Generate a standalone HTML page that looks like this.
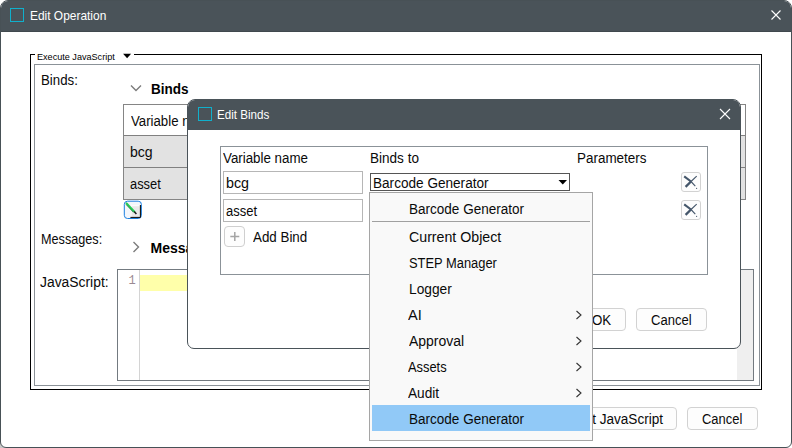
<!DOCTYPE html>
<html><head><meta charset="utf-8"><title>Edit Operation</title>
<style>
*{box-sizing:border-box;margin:0;padding:0}
html,body{width:792px;height:448px;overflow:hidden;background:#fff}
body{font-family:"Liberation Sans",sans-serif;font-size:14px;color:#0a0a0a;position:relative}
.abs,.t{position:absolute}
.t{white-space:nowrap;line-height:1;transform-origin:0 0}
#win{position:absolute;left:0;top:0;width:792px;height:448px;border:1px solid #485156;border-radius:8px 8px 6px 6px;background:#fff;overflow:hidden}
.tb{position:absolute;left:0;top:0;right:0;background:#4a5359}
.ico{position:absolute;width:14px;height:14px;border:1.5px solid #10b0cc}
.btn{position:absolute;border:1px solid #d2d2d2;border-radius:4px;background:#fdfdfd}
.fld{position:absolute;border:1px solid #b6b6b6;background:#fff}
</style></head><body>
<div class="abs" style="left:0;top:443px;width:5px;height:5px;background:#c8c8c8"></div>
<div id="win">
 <div class="tb" style="height:30px"></div>
 <div class="tb" style="top:30px;height:1px;background:#40494e"></div>
</div>
<!-- main title -->
<div class="ico" style="left:10px;top:8px"></div>
<svg class="abs" style="left:769px;top:8px" width="14" height="14" viewBox="0 0 14 14"><path d="M2.5 2.5 L11.5 11.5 M11.5 2.5 L2.5 11.5" stroke="#fff" stroke-width="1.1" fill="none"/></svg>

<!-- fieldset -->
<div class="abs" style="left:30px;top:54px;width:732px;height:336px;border:1px solid #000"></div>
<div class="abs" style="left:34px;top:64px;width:726px;height:322px;border:1px solid #8b9298"></div>
<div class="abs" style="left:35px;top:50px;width:99px;height:12px;background:#fff"></div>
<svg class="abs" style="left:123px;top:53px" width="9" height="6" viewBox="0 0 9 6"><path d="M0.1 0.8 L8.1 0.8 L4.1 5.3 Z" fill="#000"/></svg>

<!-- binds header -->
<svg class="abs" style="left:129px;top:83px" width="14" height="10" viewBox="0 0 14 10"><path d="M2 2.5 L7 7.5 L12 2.5" stroke="#7c7c7c" stroke-width="1.4" fill="none"/></svg>

<!-- table -->
<div class="abs" style="left:123px;top:104px;width:623px;height:96px;border:1px solid #858585;background:#fff"></div>
<div class="abs" style="left:124px;top:135px;width:621px;height:64px;background:#e2e2e2"></div>
<div class="abs" style="left:124px;top:135px;width:621px;height:1px;background:#808080"></div>
<div class="abs" style="left:124px;top:167px;width:621px;height:1px;background:#808080"></div>

<!-- edit icon -->
<svg class="abs" style="left:123px;top:200px" width="20" height="20" viewBox="0 0 20 20">
 <rect x="1.3" y="1.2" width="17.1" height="17.3" rx="3.2" fill="#f3f6fb" stroke="#1a7fe0" stroke-width="1"/>
 <rect x="7.5" y="5.2" width="9.6" height="12" fill="#e9e9e9"/>
 <path d="M8 17 V5.7 H17" stroke="#fff" stroke-width="1" fill="none"/>
 <path d="M17.4 5 V17.4 H7.4" stroke="#000" stroke-width="1" fill="none"/>
 <path d="M3.6 3.4 L11.3 11.6" stroke="#22cc55" stroke-width="2.1" stroke-linecap="round"/>
 <path d="M3.0 4.4 L10.4 12.2" stroke="#0b6e2b" stroke-width="0.8"/>
 <path d="M11.2 11.6 L13.4 14.0" stroke="#1c1c1c" stroke-width="1.5"/>
</svg>

<!-- messages header -->
<svg class="abs" style="left:131px;top:240px" width="10" height="14" viewBox="0 0 10 14"><path d="M2.5 2 L7.5 7 L2.5 12" stroke="#7c7c7c" stroke-width="1.4" fill="none"/></svg>

<!-- code editor -->
<div class="abs" style="left:117px;top:269px;width:637px;height:112px;border:1px solid #737a80;background:#fff"></div>
<div class="abs" style="left:139px;top:270px;width:1px;height:110px;background:#d4d4d4"></div>
<div class="abs" style="left:140px;top:275px;width:597px;height:16px;background:#ffffaa"></div>
<div class="abs" style="left:737px;top:270px;width:16px;height:110px;background:#efefef"></div>
<div class="t" style="left:128.5px;top:275.3px;font-family:'Liberation Mono',monospace;font-size:12px;color:#9b8a92">1</div>

<!-- bottom buttons -->
<div class="btn" style="left:560px;top:407px;width:117px;height:23px"></div>
<div class="btn" style="left:687px;top:407px;width:71px;height:23px"></div>
<div class="t" style="left:29.58px;top:9.50px;font-size:12.4px;transform:scaleX(0.9628);color:#fff;">Edit Operation</div>
<div class="t" style="left:36.56px;top:51.62px;font-size:9.9px;transform:scaleX(0.9201);color:#000;">Execute JavaScript</div>
<div class="t" style="left:40.97px;top:72.75px;font-size:14.0px;transform:scaleX(0.9466);">Binds:</div>
<div class="t" style="left:40.66px;top:231.65px;font-size:14.0px;transform:scaleX(0.9036);">Messages:</div>
<div class="t" style="left:39.68px;top:274.65px;font-size:14.0px;transform:scaleX(0.9911);">JavaScript:</div>
<div class="t" style="left:150.54px;top:81.75px;font-size:14.0px;transform:scaleX(0.9642);color:#000;font-weight:bold;">Binds</div>
<div class="t" style="left:150.51px;top:240.75px;font-size:14.0px;transform:scaleX(1.0000);color:#000;font-weight:bold;">Messages</div>
<div class="t" style="left:130.69px;top:113.90px;font-size:14.0px;transform:scaleX(0.9440);">Variable name</div>
<div class="t" style="left:129.67px;top:144.65px;font-size:14.0px;transform:scaleX(1.0059);">bcg</div>
<div class="t" style="left:129.64px;top:177.15px;font-size:14.0px;transform:scaleX(0.9197);">asset</div>
<div class="t" style="left:570.69px;top:412.15px;font-size:14.0px;transform:scaleX(0.9700);">Test JavaScript</div>
<div class="t" style="left:701.68px;top:412.15px;font-size:14.0px;transform:scaleX(0.9249);">Cancel</div>

<!-- inner dialog -->
<div class="abs" style="left:187px;top:99px;width:554px;height:250px;border:1px solid #4a5359;border-radius:8px 8px 7px 7px;background:#fff;overflow:hidden">
 <div class="tb" style="height:30px"></div>
</div>
<div class="ico" style="left:198px;top:107px"></div>
<svg class="abs" style="left:718px;top:107px" width="14" height="14" viewBox="0 0 14 14"><path d="M2 2 L12 12 M12 2 L2 12" stroke="#fff" stroke-width="1.1" fill="none"/></svg>

<div class="abs" style="left:220px;top:146px;width:488px;height:129px;border:1px solid #8b9298"></div>
<div class="fld" style="left:223px;top:171px;width:140px;height:23px"></div>
<div class="fld" style="left:223px;top:199px;width:140px;height:23px"></div>
<div class="abs" style="left:370px;top:173px;width:200px;height:18px;border:1px solid #555;background:#fff"></div>
<svg class="abs" style="left:558px;top:179px" width="10" height="7" viewBox="0 0 10 7"><path d="M0.5 1 L9 1 L4.75 5.6 Z" fill="#000"/></svg>

<!-- delete buttons -->
<div class="btn" style="left:681px;top:172px;width:20px;height:20px;border-radius:3px"></div>
<svg class="abs" style="left:681px;top:172px" width="20" height="20" viewBox="0 0 20 20"><g stroke="#44566a" fill="none" stroke-linecap="butt"><path d="M3.2 4.4 L10 9.5" stroke-width="2.1"/><path d="M10 9.5 L14.3 14.1" stroke-width="1.1"/><path d="M4.6 14.9 L10 9.5" stroke-width="2.3"/><path d="M10 9.5 L15.7 4.1" stroke-width="1.1"/></g><circle cx="15.6" cy="16.3" r="0.65" fill="#44566a"/></svg>
<div class="btn" style="left:681px;top:200px;width:20px;height:20px;border-radius:3px"></div>
<svg class="abs" style="left:681px;top:200px" width="20" height="20" viewBox="0 0 20 20"><g stroke="#44566a" fill="none" stroke-linecap="butt"><path d="M3.2 4.4 L10 9.5" stroke-width="2.1"/><path d="M10 9.5 L14.3 14.1" stroke-width="1.1"/><path d="M4.6 14.9 L10 9.5" stroke-width="2.3"/><path d="M10 9.5 L15.7 4.1" stroke-width="1.1"/></g><circle cx="15.6" cy="16.3" r="0.65" fill="#44566a"/></svg>

<!-- add bind -->
<div class="btn" style="left:224px;top:226px;width:21px;height:21px;border-color:#cfcfcf"></div>
<svg class="abs" style="left:224px;top:226px" width="21" height="21" viewBox="0 0 21 21"><path d="M6.3 10.4 H15.3 M10.8 5.9 V14.9" stroke="#a4a4a4" stroke-width="1.5"/></svg>

<!-- inner buttons -->
<div class="btn" style="left:575px;top:308px;width:51px;height:23px"></div>
<div class="btn" style="left:636px;top:308px;width:71px;height:23px"></div>
<div class="t" style="left:216.67px;top:108.50px;font-size:12.4px;transform:scaleX(0.9368);color:#fff;">Edit Binds</div>
<div class="t" style="left:222.69px;top:150.90px;font-size:14.0px;transform:scaleX(0.9519);">Variable name</div>
<div class="t" style="left:369.50px;top:150.90px;font-size:14.0px;transform:scaleX(0.9676);">Binds to</div>
<div class="t" style="left:576.51px;top:150.90px;font-size:14.0px;transform:scaleX(0.9597);">Parameters</div>
<div class="t" style="left:225.65px;top:176.15px;font-size:14.0px;transform:scaleX(1.0205);">bcg</div>
<div class="t" style="left:225.55px;top:204.15px;font-size:14.0px;transform:scaleX(0.9265);">asset</div>
<div class="t" style="left:372.68px;top:175.90px;font-size:14.0px;transform:scaleX(0.9704);">Barcode Generator</div>
<div class="t" style="left:252.51px;top:230.15px;font-size:14.0px;transform:scaleX(0.9545);">Add Bind</div>
<div class="t" style="left:591.62px;top:313.35px;font-size:14.0px;transform:scaleX(0.9500);">OK</div>
<div class="t" style="left:650.67px;top:313.35px;font-size:14.0px;transform:scaleX(0.9309);">Cancel</div>

<!-- popup menu -->
<div class="abs" style="left:369px;top:192px;width:224px;height:249px;border:1px solid #a5a5a5;background:#f9f9f9"></div>
<div class="abs" style="left:372px;top:221px;width:218px;height:1px;background:#a0a0a0"></div>
<div class="abs" style="left:372px;top:405px;width:218px;height:26px;background:#91c9f7"></div>
<div class="t" style="left:408.69px;top:201.90px;font-size:14.0px;transform:scaleX(0.9662);">Barcode Generator</div>
<div class="t" style="left:408.68px;top:230.15px;font-size:14.0px;transform:scaleX(1.0135);">Current Object</div>
<div class="t" style="left:408.54px;top:256.15px;font-size:14.0px;transform:scaleX(0.9209);">STEP Manager</div>
<div class="t" style="left:408.64px;top:282.15px;font-size:14.0px;transform:scaleX(0.9816);">Logger</div>
<div class="t" style="left:407.67px;top:308.15px;font-size:14.0px;transform:scaleX(1.0367);">AI</div>
<div class="t" style="left:408.67px;top:334.15px;font-size:14.0px;transform:scaleX(0.9985);">Approval</div>
<div class="t" style="left:407.53px;top:360.15px;font-size:14.0px;transform:scaleX(0.9195);">Assets</div>
<div class="t" style="left:407.51px;top:386.15px;font-size:14.0px;transform:scaleX(0.9761);">Audit</div>
<div class="t" style="left:408.69px;top:412.15px;font-size:14.0px;transform:scaleX(0.9662);">Barcode Generator</div>
<svg class="abs" style="left:574px;top:308.5px" width="10" height="12" viewBox="0 0 10 12"><path d="M2.5 2 L7 6 L2.5 10" stroke="#333" stroke-width="1.1" fill="none"/></svg>
<svg class="abs" style="left:574px;top:334.5px" width="10" height="12" viewBox="0 0 10 12"><path d="M2.5 2 L7 6 L2.5 10" stroke="#333" stroke-width="1.1" fill="none"/></svg>
<svg class="abs" style="left:574px;top:360.5px" width="10" height="12" viewBox="0 0 10 12"><path d="M2.5 2 L7 6 L2.5 10" stroke="#333" stroke-width="1.1" fill="none"/></svg>
<svg class="abs" style="left:574px;top:386.5px" width="10" height="12" viewBox="0 0 10 12"><path d="M2.5 2 L7 6 L2.5 10" stroke="#333" stroke-width="1.1" fill="none"/></svg>
</body></html>
